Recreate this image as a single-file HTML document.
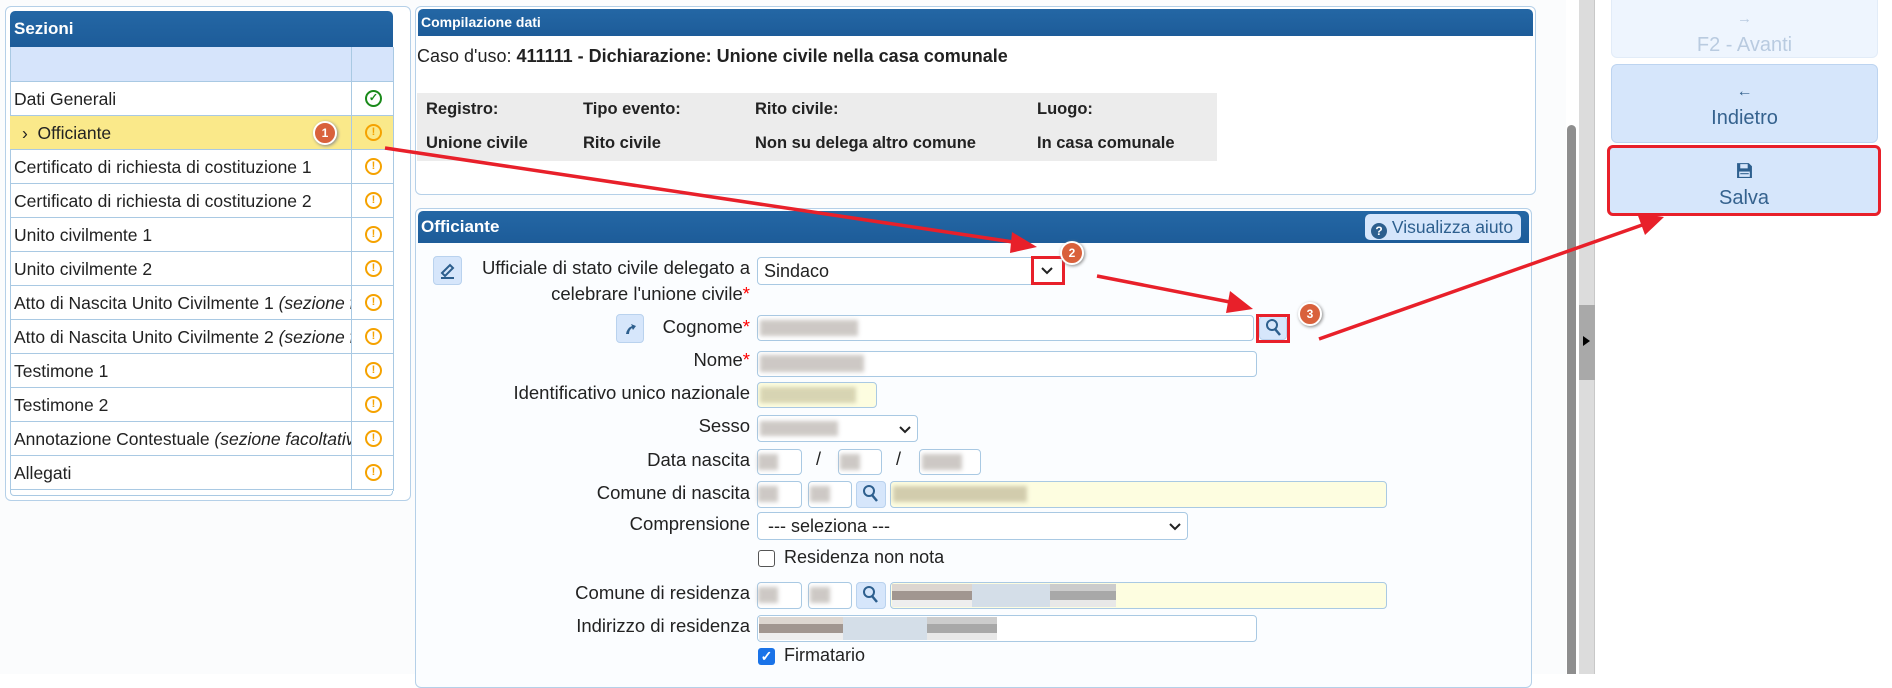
<!DOCTYPE html>
<html><head><meta charset="utf-8"><style>
*{box-sizing:border-box;margin:0;padding:0}
body{width:1892px;height:674px;overflow:hidden;background:#fff;font-family:"Liberation Sans",sans-serif;color:#222;position:relative}
.a{position:absolute}
.hdr{background:linear-gradient(#2467a5,#1d5c99);color:#fff;font-weight:bold;border-radius:5px 5px 0 0}
.row{position:absolute;left:10px;width:383px;height:34px;border-bottom:1px solid #a9c9e3;font-size:17.5px;line-height:34px;padding-left:4px;white-space:nowrap;overflow:hidden}
.ic{position:absolute;left:351px;width:42px;height:34px;border-left:1px solid #a9c9e3;border-bottom:1px solid #a9c9e3}
.warn{position:absolute;left:13px;top:8px;width:17px;height:17px;border:2px solid #f5a200;border-radius:50%;color:#f5a200;font-size:11px;font-weight:bold;line-height:13px;text-align:center}
.lbl{position:absolute;right:1142px;font-size:18.5px;text-align:right;white-space:nowrap}
.inp{position:absolute;border:1px solid #a9c9e3;border-radius:4px;background:#fff}
.y{background:#fdfde0}
.blur{position:absolute;background:#b8b2ad;filter:blur(2px);opacity:.7}
.sb{position:absolute;width:29px;height:27px;background:#d6e6fb;border:1px solid #b9d2ee;border-radius:4px}
.circ{position:absolute;width:24px;height:24px;border-radius:50%;background:#d9613c;border:2px solid #fff;box-shadow:1px 1px 3px #888;color:#fff;font-size:12px;font-weight:bold;text-align:center;line-height:20px}
.btn{position:absolute;left:1611px;width:267px;text-align:center;border-radius:6px;font-size:20px}
</style></head><body>
<div class="a" style="left:0;top:0;width:1566px;height:674px;background:#fbfcfd"></div>
<!-- Left panel -->
<div class="a" style="left:5px;top:6px;width:406px;height:495px;border:1px solid #b5d0e8;border-radius:6px;background:#fff"></div>
<div class="a hdr" style="left:10px;top:11px;width:383px;height:36px;font-size:17px;line-height:36px;padding-left:4px">Sezioni</div>
<div class="a" style="left:10px;top:47px;width:383px;height:35px;background:#d6e4fb;border-bottom:1px solid #a9c9e3"></div>
<div class="a" style="left:351px;top:47px;width:1px;height:35px;background:#a9c9e3"></div>
<div class="a" style="left:10px;top:47px;width:1px;height:444px;background:#a9c9e3"></div>
<div class="a" style="left:393px;top:47px;width:1px;height:444px;background:#a9c9e3"></div>
<div class="row" style="top:82px">Dati Generali</div><div class="ic" style="top:82px"><div class="warn" style="border-color:#1a8a1a;color:#1a8a1a">✓</div></div>
<div class="row" style="top:116px;background:#fae98a;padding-left:12px">›&nbsp; Officiante</div><div class="ic" style="top:116px;background:#fae98a"><div class="warn">!</div></div>
<div class="row" style="top:150px">Certificato di richiesta di costituzione 1</div><div class="ic" style="top:150px"><div class="warn">!</div></div>
<div class="row" style="top:184px">Certificato di richiesta di costituzione 2</div><div class="ic" style="top:184px"><div class="warn">!</div></div>
<div class="row" style="top:218px">Unito civilmente 1</div><div class="ic" style="top:218px"><div class="warn">!</div></div>
<div class="row" style="top:252px">Unito civilmente 2</div><div class="ic" style="top:252px"><div class="warn">!</div></div>
<div class="row" style="top:286px;width:341px">Atto di Nascita Unito Civilmente 1 <i>(sezione facoltativa)</i></div><div class="ic" style="top:286px"><div class="warn">!</div></div>
<div class="row" style="top:320px;width:341px">Atto di Nascita Unito Civilmente 2 <i>(sezione facoltativa)</i></div><div class="ic" style="top:320px"><div class="warn">!</div></div>
<div class="row" style="top:354px">Testimone 1</div><div class="ic" style="top:354px"><div class="warn">!</div></div>
<div class="row" style="top:388px">Testimone 2</div><div class="ic" style="top:388px"><div class="warn">!</div></div>
<div class="row" style="top:422px;width:341px">Annotazione Contestuale <i>(sezione facoltativa)</i></div><div class="ic" style="top:422px"><div class="warn">!</div></div>
<div class="row" style="top:456px">Allegati</div><div class="ic" style="top:456px"><div class="warn">!</div></div>
<div class="a" style="left:10px;top:491px;width:383px;height:5px;border:1px solid #a9c9e3;border-top:none;border-radius:0 0 4px 4px"></div>

<!-- Compilazione -->
<div class="a" style="left:415px;top:6px;width:1121px;height:189px;border:1px solid #b5d0e8;border-radius:6px;background:#fff"></div>
<div class="a hdr" style="left:418px;top:9px;width:1115px;height:27px;font-size:14px;line-height:27px;padding-left:3px">Compilazione dati</div>
<div class="a" style="left:417px;top:46px;font-size:18px">Caso d'uso: <b>411111 - Dichiarazione: Unione civile nella casa comunale</b></div>
<div class="a" style="left:417px;top:93px;width:800px;height:68px;background:#ececec;font-size:16.5px;font-weight:bold">
<div class="a" style="left:9px;top:7px">Registro:</div><div class="a" style="left:166px;top:7px">Tipo evento:</div><div class="a" style="left:338px;top:7px">Rito civile:</div><div class="a" style="left:620px;top:7px">Luogo:</div>
<div class="a" style="left:9px;top:41px">Unione civile</div><div class="a" style="left:166px;top:41px">Rito civile</div><div class="a" style="left:338px;top:41px">Non su delega altro comune</div><div class="a" style="left:620px;top:41px">In casa comunale</div>
</div>

<!-- Officiante -->
<div class="a" style="left:415px;top:208px;width:1117px;height:480px;border:1px solid #b5d0e8;border-radius:6px;background:#fbfdff"></div>
<div class="a hdr" style="left:418px;top:211px;width:1111px;height:32px;font-size:17px;line-height:32px;padding-left:3px">Officiante</div>
<div class="a" style="left:1365px;top:214px;width:156px;height:26px;background:#d6e6fb;border-radius:5px;color:#2d5f8e;font-size:17.5px;line-height:26px;padding-left:6px"><span style="display:inline-block;width:16px;height:16px;border-radius:50%;background:#2d5f8e;color:#fff;font-size:12px;line-height:16px;text-align:center;font-weight:bold;vertical-align:-2px">?</span> Visualizza aiuto</div>

<div class="sb" style="left:433px;top:256px;width:29px;height:29px"><svg width="27" height="27" viewBox="0 0 27 27"><path d="M8 16 L16 8 L19 11 L11 19 Z" fill="none" stroke="#2d5f8e" stroke-width="2"/><line x1="7" y1="21" x2="20" y2="21" stroke="#2d5f8e" stroke-width="2"/></svg></div>
<div class="lbl" style="top:257px;right:1142px">Ufficiale di stato civile delegato a</div>
<div class="lbl" style="top:283px">celebrare l'unione civile<span style="color:red">*</span></div>
<div class="inp" style="left:757px;top:257px;width:307px;height:28px;font-size:18px;line-height:26px;padding-left:6px">Sindaco<svg class="a" style="left:282px;top:8px" width="14" height="10"><path d="M2 2 L7 7 L12 2" fill="none" stroke="#222" stroke-width="2"/></svg></div>

<div class="sb" style="left:616px;top:314px;width:28px;height:29px"><svg width="26" height="27"><path d="M9 19 Q10 13 15 11 L14 9 L19 11 L16 15 L15 13 Q12 15 12 19 Z" fill="#2d5f8e"/></svg></div>
<div class="lbl" style="top:316px">Cognome<span style="color:red">*</span></div>
<div class="inp" style="left:757px;top:315px;width:497px;height:26px"></div><div class="blur" style="left:760px;top:320px;width:98px;height:16px"></div>
<div class="sb" style="left:1259px;top:316px;width:28px;height:24px"></div>
<svg class="a" style="left:1265px;top:318px" width="18" height="20"><circle cx="7" cy="7" r="5" fill="none" stroke="#2d5f8e" stroke-width="2"/><line x1="10" y1="11" x2="15" y2="17" stroke="#2d5f8e" stroke-width="2.5"/></svg>

<div class="lbl" style="top:349px">Nome<span style="color:red">*</span></div>
<div class="inp" style="left:757px;top:351px;width:500px;height:26px"></div><div class="blur" style="left:760px;top:355px;width:104px;height:17px"></div>
<div class="lbl" style="top:382px">Identificativo unico nazionale</div>
<div class="inp y" style="left:757px;top:382px;width:120px;height:26px"></div><div class="blur" style="left:760px;top:387px;width:96px;height:16px;background:#c8c4a0"></div>
<div class="lbl" style="top:415px">Sesso</div>
<div class="inp" style="left:757px;top:415px;width:161px;height:27px"><svg class="a" style="left:140px;top:9px" width="14" height="10"><path d="M2 2 L7 7 L12 2" fill="none" stroke="#222" stroke-width="2"/></svg></div><div class="blur" style="left:760px;top:421px;width:78px;height:15px"></div>
<div class="lbl" style="top:449px">Data nascita</div>
<div class="inp" style="left:757px;top:449px;width:45px;height:26px"></div><div class="blur" style="left:758px;top:454px;width:20px;height:16px"></div>
<div class="a" style="left:816px;top:449px;font-size:18px">/</div>
<div class="inp" style="left:838px;top:449px;width:44px;height:26px"></div><div class="blur" style="left:840px;top:454px;width:20px;height:16px"></div>
<div class="a" style="left:896px;top:449px;font-size:18px">/</div>
<div class="inp" style="left:919px;top:449px;width:62px;height:26px"></div><div class="blur" style="left:922px;top:454px;width:40px;height:16px"></div>
<div class="lbl" style="top:482px">Comune di nascita</div>
<div class="inp" style="left:757px;top:481px;width:45px;height:27px"></div><div class="blur" style="left:758px;top:486px;width:20px;height:16px"></div>
<div class="inp" style="left:808px;top:481px;width:44px;height:27px"></div><div class="blur" style="left:810px;top:486px;width:20px;height:16px"></div>
<div class="sb" style="left:856px;top:481px;width:30px;height:27px"></div>
<svg class="a" style="left:862px;top:484px" width="18" height="20"><circle cx="7" cy="7" r="5" fill="none" stroke="#2d5f8e" stroke-width="2"/><line x1="10" y1="11" x2="15" y2="17" stroke="#2d5f8e" stroke-width="2.5"/></svg>
<div class="inp y" style="left:890px;top:481px;width:497px;height:27px"></div><div class="blur" style="left:893px;top:486px;width:134px;height:16px;background:#c0b898"></div>
<div class="lbl" style="top:513px">Comprensione</div>
<div class="inp" style="left:757px;top:512px;width:431px;height:28px;font-size:18px;line-height:26px;padding-left:10px">--- seleziona ---<svg class="a" style="left:410px;top:9px" width="14" height="10"><path d="M2 2 L7 7 L12 2" fill="none" stroke="#222" stroke-width="2"/></svg></div>
<div class="a" style="left:758px;top:550px;width:17px;height:17px;border:1.5px solid #555;border-radius:3px;background:#fff"></div>
<div class="a" style="left:784px;top:547px;font-size:18px">Residenza non nota</div>
<div class="lbl" style="top:582px">Comune di residenza</div>
<div class="inp" style="left:757px;top:582px;width:45px;height:27px"></div><div class="blur" style="left:758px;top:587px;width:20px;height:16px"></div>
<div class="inp" style="left:808px;top:582px;width:44px;height:27px"></div><div class="blur" style="left:810px;top:587px;width:20px;height:16px"></div>
<div class="sb" style="left:856px;top:582px;width:30px;height:27px"></div>
<svg class="a" style="left:862px;top:585px" width="18" height="20"><circle cx="7" cy="7" r="5" fill="none" stroke="#2d5f8e" stroke-width="2"/><line x1="10" y1="11" x2="15" y2="17" stroke="#2d5f8e" stroke-width="2.5"/></svg>
<div class="inp y" style="left:890px;top:582px;width:497px;height:27px"></div>
<div class="a" style="left:892px;top:584px;width:80px;height:23px;background:linear-gradient(#ddd6d0 30%,#a19690 30%,#a19690 70%,#eee 70%)"></div>
<div class="a" style="left:972px;top:584px;width:78px;height:23px;background:#d4dee8"></div>
<div class="a" style="left:1050px;top:584px;width:66px;height:23px;background:linear-gradient(#ccc 30%,#a8a8a8 30%,#a8a8a8 70%,#e8e8e8 70%)"></div>
<div class="lbl" style="top:615px">Indirizzo di residenza</div>
<div class="inp" style="left:757px;top:615px;width:500px;height:27px"></div>
<div class="a" style="left:759px;top:617px;width:84px;height:23px;background:linear-gradient(#ddd6d0 30%,#a19690 30%,#a19690 70%,#eee 70%)"></div>
<div class="a" style="left:843px;top:617px;width:84px;height:23px;background:#d4dee8"></div>
<div class="a" style="left:927px;top:617px;width:70px;height:23px;background:linear-gradient(#ccc 30%,#a8a8a8 30%,#a8a8a8 70%,#e8e8e8 70%)"></div>
<div class="a" style="left:758px;top:648px;width:17px;height:17px;border-radius:3px;background:#1a73e8;color:#fff;font-size:14px;line-height:17px;text-align:center;font-weight:bold">✓</div>
<div class="a" style="left:784px;top:645px;font-size:18px">Firmatario</div>

<!-- scrollbars -->
<div class="a" style="left:1567px;top:125px;width:9px;height:549px;background:#8e8e8e;border-radius:5px 5px 0 0"></div>
<div class="a" style="left:1579px;top:0;width:16px;height:674px;background:#dcdcdc;border-right:1px solid #c8c8c8"></div>
<div class="a" style="left:1579px;top:305px;width:16px;height:75px;background:#a9a9a9"></div>
<div class="a" style="left:1583px;top:336px;width:0;height:0;border-left:7px solid #000;border-top:5px solid transparent;border-bottom:5px solid transparent"></div>

<!-- right buttons -->
<div class="btn" style="top:-6px;height:64px;background:#eef5fe;border:1px solid #e2ecf8;color:#b9cbe0;padding-top:12px;line-height:20px"><span style="font-size:15px">→</span><br><span style="line-height:32px">F2 - Avanti</span></div>
<div class="btn" style="top:64px;height:79px;background:#d6e6fb;border:1px solid #bdd4f0;color:#35628e;padding-top:15px;line-height:20px"><span style="font-size:16px;font-weight:bold">←</span><br><span style="line-height:32px">Indietro</span></div>
<div class="btn" style="left:1607px;top:145px;width:274px;height:71px;background:#d6e6fb;border:3px solid #e8202a;color:#35628e;padding-top:14px;line-height:20px"><svg width="17" height="17" viewBox="0 0 16 16"><path d="M1 1 H12 L15 4 V15 H1 Z" fill="#2d5f8e"/><rect x="4" y="2" width="7" height="4" fill="#d6e6fb"/><rect x="3" y="9" width="10" height="5" fill="#d6e6fb"/><line x1="4" y1="11" x2="12" y2="11" stroke="#2d5f8e"/></svg><br><span style="line-height:30px">Salva</span></div>

<!-- annotations -->
<div class="a" style="left:1031px;top:256px;width:34px;height:29px;border:3px solid #e8202a"></div>
<div class="a" style="left:1256px;top:314px;width:34px;height:29px;border:3px solid #e8202a"></div>
<svg class="a" style="left:0;top:0" width="1892" height="674">
<g stroke="#e8202a" stroke-width="3.5" fill="#e8202a">
<line x1="385" y1="148" x2="1020" y2="243"/><polygon points="1037,247 1012,232 1010,253" stroke="none"/>
<line x1="1097" y1="276" x2="1235" y2="303"/><polygon points="1253,309 1230,291 1226,313" stroke="none"/>
<line x1="1319" y1="339" x2="1645" y2="224"/><polygon points="1664,217 1637,213 1645,235" stroke="none"/>
</g></svg>
<div class="circ" style="left:313px;top:121px">1</div>
<div class="circ" style="left:1060px;top:241px">2</div>
<div class="circ" style="left:1298px;top:302px">3</div>
</body></html>
